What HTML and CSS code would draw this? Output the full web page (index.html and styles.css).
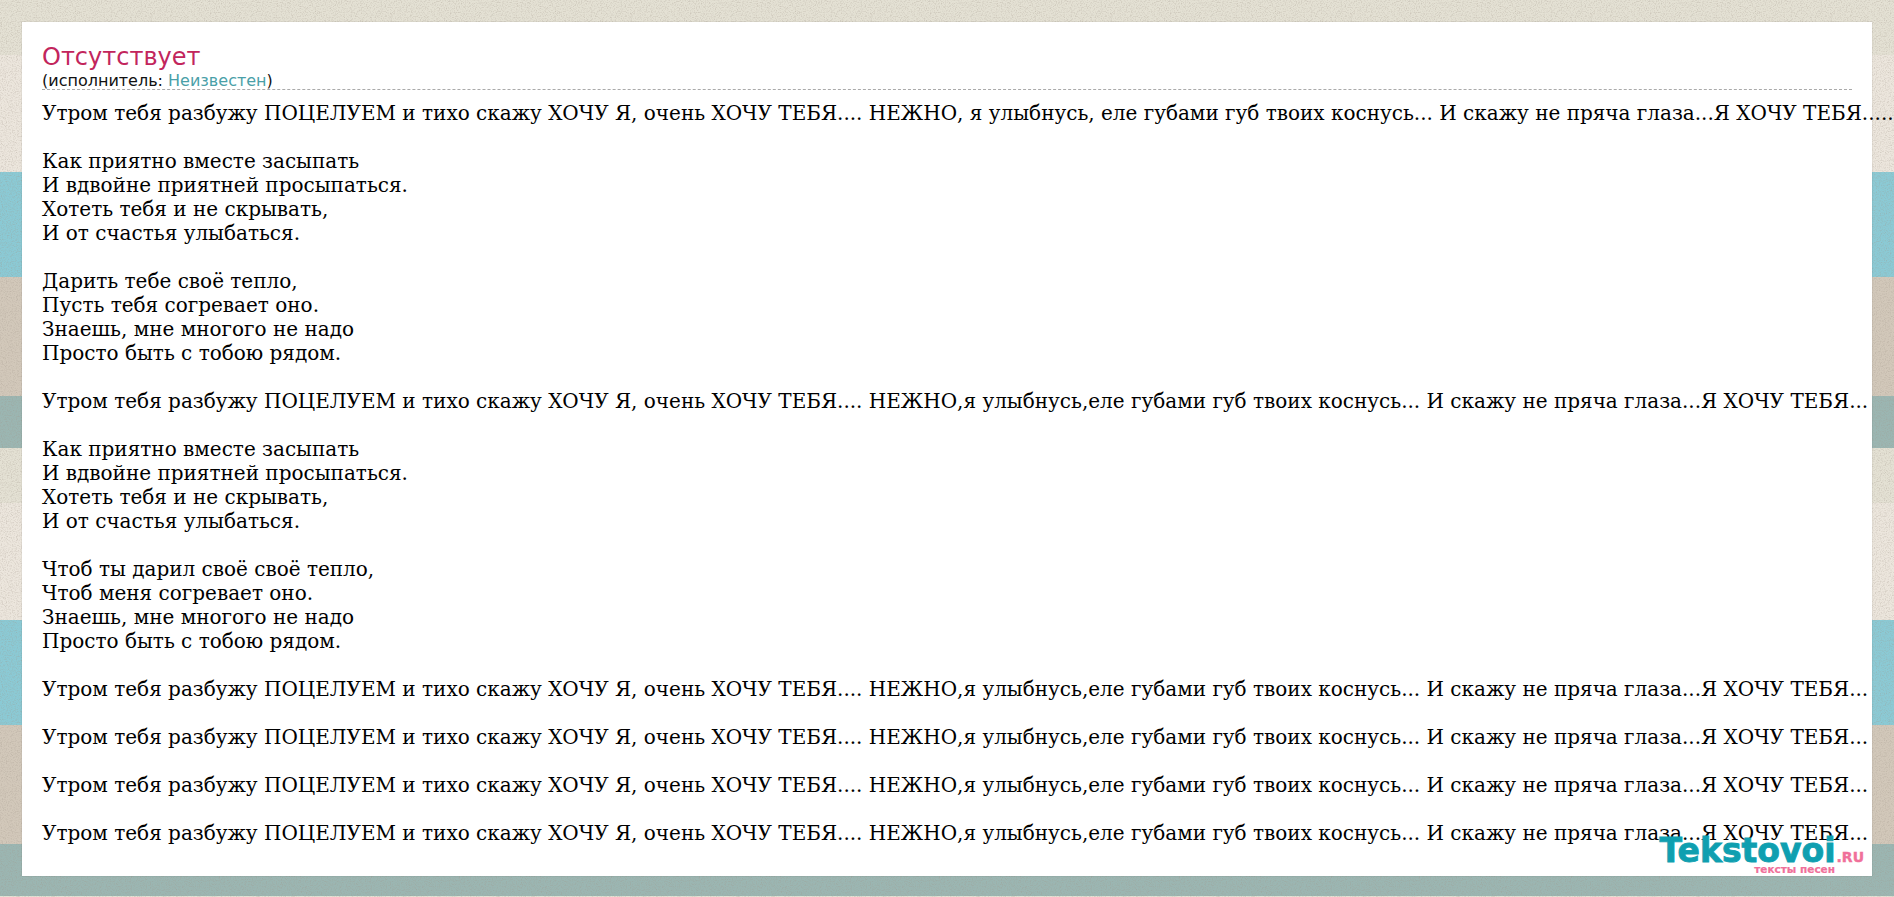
FILE: index.html
```html
<!DOCTYPE html>
<html lang="ru">
<head>
<meta charset="utf-8">
<title>Отсутствует</title>
<link rel="stylesheet" href="styles.css">
</head>
<body>
<main class="sheet">
<h1 class="title">Отсутствует</h1>
<div class="artist">(исполнитель: <a class="artist-link" href="#">Неизвестен</a>)</div>
<div class="lyrics">Утром тебя разбужу ПОЦЕЛУЕМ и тихо скажу ХОЧУ Я, очень ХОЧУ ТЕБЯ.... НЕЖНО, я улыбнусь, еле губами губ твоих коснусь... И скажу не пряча глаза...Я ХОЧУ ТЕБЯ.....

Как приятно вместе засыпать
И вдвойне приятней просыпаться.
Хотеть тебя и не скрывать,
И от счастья улыбаться.

Дарить тебе своё тепло,
Пусть тебя согревает оно.
Знаешь, мне многого не надо
Просто быть с тобою рядом.

Утром тебя разбужу ПОЦЕЛУЕМ и тихо скажу ХОЧУ Я, очень ХОЧУ ТЕБЯ.... НЕЖНО,я улыбнусь,еле губами губ твоих коснусь... И скажу не пряча глаза...Я ХОЧУ ТЕБЯ...

Как приятно вместе засыпать
И вдвойне приятней просыпаться.
Хотеть тебя и не скрывать,
И от счастья улыбаться.

Чтоб ты дарил своё своё тепло,
Чтоб меня согревает оно.
Знаешь, мне многого не надо
Просто быть с тобою рядом.

Утром тебя разбужу ПОЦЕЛУЕМ и тихо скажу ХОЧУ Я, очень ХОЧУ ТЕБЯ.... НЕЖНО,я улыбнусь,еле губами губ твоих коснусь... И скажу не пряча глаза...Я ХОЧУ ТЕБЯ...

Утром тебя разбужу ПОЦЕЛУЕМ и тихо скажу ХОЧУ Я, очень ХОЧУ ТЕБЯ.... НЕЖНО,я улыбнусь,еле губами губ твоих коснусь... И скажу не пряча глаза...Я ХОЧУ ТЕБЯ...

Утром тебя разбужу ПОЦЕЛУЕМ и тихо скажу ХОЧУ Я, очень ХОЧУ ТЕБЯ.... НЕЖНО,я улыбнусь,еле губами губ твоих коснусь... И скажу не пряча глаза...Я ХОЧУ ТЕБЯ...

Утром тебя разбужу ПОЦЕЛУЕМ и тихо скажу ХОЧУ Я, очень ХОЧУ ТЕБЯ.... НЕЖНО,я улыбнусь,еле губами губ твоих коснусь... И скажу не пряча глаза...Я ХОЧУ ТЕБЯ...</div>
<div class="logo"><div class="logo-main">Tekstovoi<span class="logo-tld">.ru</span></div><div class="logo-sub">тексты песен</div></div>
</main>
</body>
</html>
```
FILE: styles.css
```css
html, body {
  height: 100%;
  margin: 0;
  overflow: hidden;
}
body {
  padding: 22px;
  box-sizing: border-box;
  background-color: #e0ddd1;
  background-image:
    url("data:image/svg+xml,%3Csvg xmlns='http://www.w3.org/2000/svg' width='240' height='240'%3E%3Cfilter id='n'%3E%3CfeTurbulence type='fractalNoise' baseFrequency='.8' numOctaves='2' stitchTiles='stitch'/%3E%3CfeColorMatrix values='0 0 0 0 .35 0 0 0 0 .3 0 0 0 0 .25 .6 .6 0 0 -.55'/%3E%3C/filter%3E%3Crect width='240' height='240' filter='url(%23n)'/%3E%3C/svg%3E"),
    linear-gradient(to bottom,
      #e4e1d4 0, #e4e1d4 55px,
      #ece6dd 55px, #ece6dd 172px,
      #8bcad5 172px, #8bcad5 277px,
      #d2c8ba 277px, #d2c8ba 396px,
      #9bb6b2 396px, #9bb6b2 448px);
  background-size: 240px 240px, 100% 448px;
  background-repeat: repeat, repeat-y;
}
.sheet {
  position: relative;
  height: 854px;
  padding: 21px 20px 20px;
  box-sizing: border-box;
  background: #fff;
  box-shadow: 0 0 1px rgba(0,0,0,.25);
}
.title {
  margin: 0;
  font: 400 24px/29px "DejaVu Sans", sans-serif;
  color: #c2255c;
}
.artist {
  font: 400 16px/17px "DejaVu Sans", sans-serif;
  color: #111;
  border-bottom: 1px dashed #aaa;
}
.artist-link {
  color: #4a9fa8;
  text-decoration: none;
}
.lyrics {
  margin-top: 11px;
  font: 400 19.99px/24px "DejaVu Serif", serif;
  color: #000;
  white-space: pre;
}
.logo {
  position: absolute;
  right: 8px;
  bottom: 2px;
  text-align: right;
}
.logo-main {
  font: 700 33px/18px "DejaVu Sans", sans-serif;
  color: #0f9fb0;
  letter-spacing: 0;
  -webkit-text-stroke: .9px #0f9fb0;
}
.logo-tld {
  margin-left: 1px;
  font-size: 14px;
  color: #f0709a;
  text-transform: uppercase;
  -webkit-text-stroke: .4px #f0709a;
}
.logo-sub {
  margin-top: -2px;
  padding-right: 29px;
  font: 700 10.5px/10px "DejaVu Sans", sans-serif;
  color: #f0709a;
  -webkit-text-stroke: .2px #f0709a;
}
```
